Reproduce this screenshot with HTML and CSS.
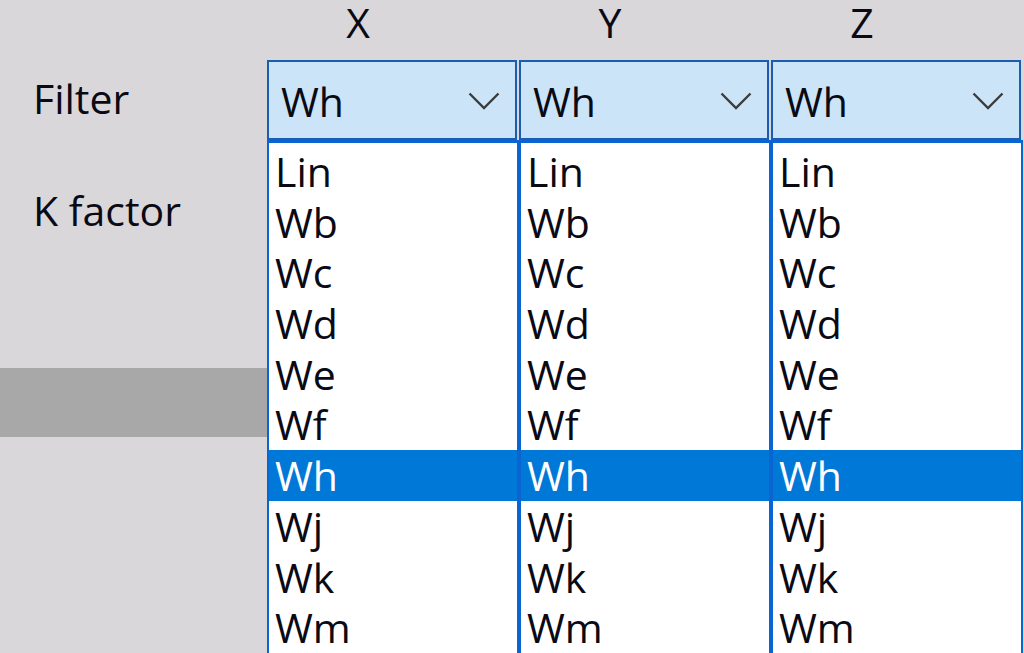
FILE: index.html
```html
<!DOCTYPE html>
<html lang="en">
<head>
<meta charset="utf-8">
<title>Filter settings</title>
<link rel="stylesheet" href="styles.css">
</head>
<body>
<div class="page">
  <div class="side">
    <div class="label label-filter">Filter</div>
    <div class="label label-k">K factor</div>
    <div class="band"></div>
  </div>
  <div class="axes">
    <div class="axis">
      <div class="axis-head">X</div>
      <div class="combo"><span class="combo-value">Wh</span><svg class="chev" viewBox="0 0 32 18" width="32" height="18"><path d="M1.5 1.5 L16 16 L30.5 1.5" fill="none" stroke="#3c3c3c" stroke-width="2.4"/></svg></div>
      <ul class="list">
        <li>Lin</li><li>Wb</li><li>Wc</li><li>Wd</li><li>We</li><li>Wf</li><li class="sel">Wh</li><li>Wj</li><li>Wk</li><li>Wm</li>
      </ul>
    </div>
    <div class="axis">
      <div class="axis-head">Y</div>
      <div class="combo"><span class="combo-value">Wh</span><svg class="chev" viewBox="0 0 32 18" width="32" height="18"><path d="M1.5 1.5 L16 16 L30.5 1.5" fill="none" stroke="#3c3c3c" stroke-width="2.4"/></svg></div>
      <ul class="list">
        <li>Lin</li><li>Wb</li><li>Wc</li><li>Wd</li><li>We</li><li>Wf</li><li class="sel">Wh</li><li>Wj</li><li>Wk</li><li>Wm</li>
      </ul>
    </div>
    <div class="axis">
      <div class="axis-head">Z</div>
      <div class="combo"><span class="combo-value">Wh</span><svg class="chev" viewBox="0 0 32 18" width="32" height="18"><path d="M1.5 1.5 L16 16 L30.5 1.5" fill="none" stroke="#3c3c3c" stroke-width="2.4"/></svg></div>
      <ul class="list">
        <li>Lin</li><li>Wb</li><li>Wc</li><li>Wd</li><li>We</li><li>Wf</li><li class="sel">Wh</li><li>Wj</li><li>Wk</li><li>Wm</li>
      </ul>
    </div>
  </div>
</div>
</body>
</html>
```
FILE: styles.css
```css
html, body {
  margin: 0;
  padding: 0;
  height: 100%;
  overflow: hidden;
}
body {
  background: #d9d7da;
  font-family: "Open Sans", "Noto Sans", sans-serif;
  font-size: 41px;
  color: #0a0a14;
}
.page {
  display: flex;
  height: 653px;
}
.side {
  width: 267px;
  flex: none;
  display: flex;
  flex-direction: column;
}
.label {
  padding-left: 33px;
  line-height: 76px;
  height: 76px;
  white-space: nowrap;
}
.label-filter {
  margin-top: 60px;
}
.label-k {
  margin-top: 36px;
}
.band {
  margin-top: 120px;
  height: 69px;
  background: #a8a8a8;
}
.axes {
  display: grid;
  grid-template-columns: repeat(3, 252px);
}
.axis {
  display: flex;
  flex-direction: column;
}
.axis-head {
  width: 182px;
  height: 60px;
  line-height: 44px;
  text-align: center;
}
.combo {
  box-sizing: border-box;
  width: 250px;
  height: 80px;
  flex: none;
  border: 2px solid #1b5db0;
  background: #cce4f7;
  display: flex;
  align-items: center;
  justify-content: space-between;
  padding: 0 15px 0 12px;
}
.combo-value {
  line-height: 76px;
  padding-top: 2px;
}
.chev {
  display: block;
  margin-top: 2px;
}
.list {
  list-style: none;
  margin: 0;
  padding: 3px 0 0 0;
  border: 2px solid #0a64d2;
  border-top-width: 3px;
  background: #ffffff;
  flex: 1;
}
.list li {
  height: 50.7px;
  line-height: 50.7px;
  padding-left: 6px;
  white-space: nowrap;
}
.list li.sel {
  background: #0078d7;
  color: #ffffff;
}
```
